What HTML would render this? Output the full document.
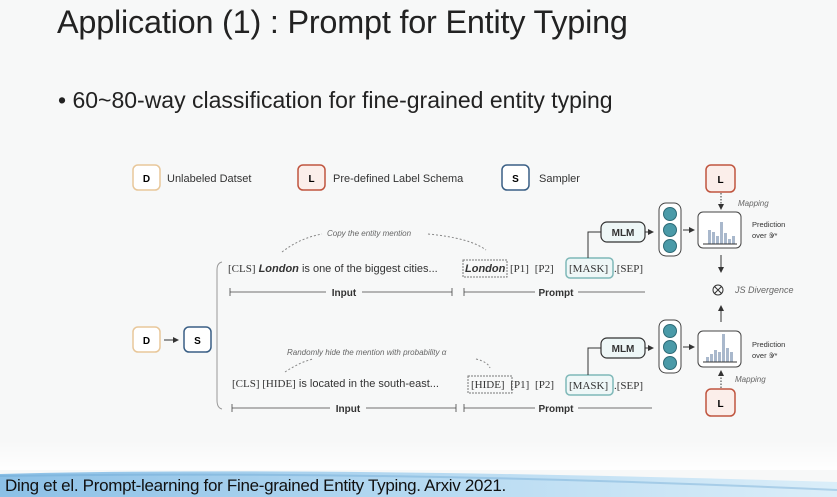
<!DOCTYPE html>
<html><head><meta charset="utf-8"><style>
body{margin:0;width:837px;height:497px;overflow:hidden;background:#f7f8f8;font-family:"Liberation Sans",sans-serif;position:relative}
.a{position:absolute;white-space:nowrap}
</style></head><body>
<div class="a" style="left:57px;top:4px;font-size:32.4px;color:#222;letter-spacing:-0.2px">Application (1) : Prompt for Entity Typing</div>
<div class="a" style="left:58px;top:87px;font-size:23px;color:#222">• 60~80-way classification for fine-grained entity typing</div>
<svg class="a" style="left:0;top:0" width="837" height="497" font-family="Liberation Sans, sans-serif">
<defs><linearGradient id="g" x1="0" y1="0" x2="1" y2="0"><stop offset="0" stop-color="#8cc0e6"/><stop offset="0.5" stop-color="#b5d9f1"/><stop offset="1" stop-color="#dbeef9"/></linearGradient>
<linearGradient id="gv" x1="0" y1="0" x2="0" y2="1"><stop offset="0" stop-color="#fff" stop-opacity="0"/><stop offset="1" stop-color="#fff" stop-opacity="0.9"/></linearGradient>
<marker id="ar" markerWidth="6" markerHeight="6" refX="5" refY="3" orient="auto"><path d="M0,0L6,3L0,6z" fill="#333"/></marker></defs>
<rect x="0" y="440" width="837" height="30" fill="url(#gv)"/>
<g font-size="10" font-weight="bold" text-anchor="middle">
<rect x="133" y="165" width="27" height="25" rx="5" fill="#fff" stroke="#e8c79a" stroke-width="1.5"/><text x="146.5" y="182">D</text>
<rect x="298" y="165" width="27" height="25" rx="5" fill="#fbeeea" stroke="#c0553f" stroke-width="1.5"/><text x="311.5" y="182">L</text>
<rect x="502" y="165" width="27" height="25" rx="5" fill="#fff" stroke="#3a5f85" stroke-width="1.5"/><text x="515.5" y="182">S</text>
<rect x="706" y="165" width="29" height="27" rx="5" fill="#fbeeea" stroke="#c0553f" stroke-width="1.5"/><text x="720.5" y="183">L</text>
<rect x="706" y="389" width="29" height="27" rx="5" fill="#fbeeea" stroke="#c0553f" stroke-width="1.5"/><text x="720.5" y="407">L</text>
<rect x="133" y="327" width="27" height="25" rx="5" fill="#fff" stroke="#e8c79a" stroke-width="1.5"/><text x="146.5" y="344">D</text>
<rect x="184" y="327" width="27" height="25" rx="5" fill="#fff" stroke="#3a5f85" stroke-width="1.5"/><text x="197.5" y="344">S</text>
</g>
<g font-size="11" fill="#333">
<text x="167" y="182">Unlabeled Datset</text><text x="333" y="182">Pre-defined Label Schema</text><text x="539" y="182">Sampler</text>
</g>
<line x1="164" y1="340" x2="178" y2="340" stroke="#333" marker-end="url(#ar)"/>
<path d="M222,262 Q217,263 217,270 V400 Q217,408 222,409" fill="none" stroke="#999"/>
<g font-size="8" font-style="italic" fill="#666">
<text x="327" y="236">Copy the entity mention</text>
<text x="287" y="355">Randomly hide the mention with probability α</text>
<text x="738" y="206">Mapping</text><text x="735" y="382">Mapping</text>
<text x="735" y="293" font-size="9">JS Divergence</text>
</g>
<path d="M282,252 Q300,238 322,234 M428,234 Q470,238 486,250" fill="none" stroke="#888" stroke-dasharray="2,2"/>
<path d="M285,372 Q300,362 313,359 M476,359 Q488,362 490,368" fill="none" stroke="#888" stroke-dasharray="2,2"/>
<g font-size="11" fill="#333">
<text x="228" y="272"><tspan font-family="Liberation Serif">[CLS]</tspan> <tspan font-weight="bold" font-style="italic">London</tspan> is one of the biggest cities...</text>
<rect x="463" y="260" width="44" height="17" fill="none" stroke="#777" stroke-dasharray="2,1"/>
<text x="465" y="272" font-weight="bold" font-style="italic">London</text>
<text x="510" y="272" font-family="Liberation Serif" word-spacing="3">[P1] [P2]</text>
<rect x="566" y="258" width="47" height="20" rx="4" fill="#eef7f7" stroke="#7fb8b8" stroke-width="1.5"/>
<text x="569" y="272" font-family="Liberation Serif">[MASK]</text><text x="614" y="272" font-family="Liberation Serif">.[SEP]</text>
<text x="232" y="387"><tspan font-family="Liberation Serif">[CLS] [HIDE]</tspan> is located in the south-east...</text>
<rect x="468" y="376" width="44" height="17" fill="none" stroke="#777" stroke-dasharray="2,1"/>
<text x="471" y="388" font-family="Liberation Serif" word-spacing="3">[HIDE] [P1] [P2]</text>
<rect x="566" y="375" width="47" height="20" rx="4" fill="#eef7f7" stroke="#7fb8b8" stroke-width="1.5"/>
<text x="569" y="389" font-family="Liberation Serif">[MASK]</text><text x="614" y="389" font-family="Liberation Serif">.[SEP]</text>
<g font-size="10" font-weight="bold" text-anchor="middle"><text x="344" y="296">Input</text><text x="556" y="296">Prompt</text><text x="348" y="412">Input</text><text x="556" y="412">Prompt</text></g>
</g>
<g stroke="#444" stroke-width="0.8">
<path d="M230,292H326M362,292H452M230,288v8M452,288v8M464,292H535M578,292H645M464,288v8"/>
<path d="M232,408H330M366,408H456M232,404v8M456,404v8M464,408H535M578,408H652M464,404v8"/>
</g>
<g stroke="#333" fill="none">
<path d="M588,258V232H601"/><path d="M588,375V348H601"/>
<line x1="645" y1="232" x2="653" y2="232" marker-end="url(#ar)"/><line x1="645" y1="348" x2="653" y2="348" marker-end="url(#ar)"/>
<line x1="683" y1="230" x2="694" y2="230" marker-end="url(#ar)"/><line x1="683" y1="347" x2="694" y2="347" marker-end="url(#ar)"/>
<line x1="721" y1="255" x2="721" y2="272" marker-end="url(#ar)"/><line x1="721" y1="322" x2="721" y2="306" marker-end="url(#ar)"/>
<line x1="721" y1="193" x2="721" y2="209" stroke-dasharray="1.5,1.5" marker-end="url(#ar)"/><line x1="721" y1="388" x2="721" y2="371" stroke-dasharray="1.5,1.5" marker-end="url(#ar)"/>
<circle cx="718" cy="290" r="5"/><path d="M714.5,286.5l7,7M721.5,286.5l-7,7"/>
</g>
<g font-size="10" font-weight="bold" text-anchor="middle" fill="#333">
<rect x="601" y="222" width="44" height="20" rx="6" fill="#eef7f7" stroke="#333" stroke-width="1.2"/><text x="623" y="236">MLM</text>
<rect x="601" y="338" width="44" height="20" rx="6" fill="#eef7f7" stroke="#333" stroke-width="1.2"/><text x="623" y="352">MLM</text>
</g>
<g stroke="#444" stroke-width="1">
<rect x="659" y="203" width="22" height="53" rx="7" fill="#fff"/><rect x="659" y="320" width="22" height="53" rx="7" fill="#fff"/>
<g fill="#4a9aa8" stroke="#2e6b77"><circle cx="670" cy="214" r="6.5"/><circle cx="670" cy="230" r="6.5"/><circle cx="670" cy="246" r="6.5"/>
<circle cx="670" cy="331" r="6.5"/><circle cx="670" cy="347" r="6.5"/><circle cx="670" cy="363" r="6.5"/></g>
<rect x="698" y="212" width="43" height="36" rx="5" fill="#fff"/><rect x="698" y="331" width="43" height="36" rx="5" fill="#fff"/>
</g>
<g fill="#a9b8cc">
<rect x="708" y="230" width="3" height="14"/><rect x="712" y="232" width="3" height="12"/><rect x="716" y="236" width="3" height="8"/><rect x="720" y="222" width="3" height="22"/><rect x="724" y="233" width="3" height="11"/><rect x="728" y="239" width="3" height="5"/><rect x="732" y="236" width="3" height="8"/>
<rect x="706" y="357" width="3" height="5"/><rect x="710" y="354" width="3" height="8"/><rect x="714" y="350" width="3" height="12"/><rect x="718" y="352" width="3" height="10"/><rect x="722" y="334" width="3" height="28"/><rect x="726" y="348" width="3" height="14"/><rect x="730" y="352" width="3" height="10"/>
</g>
<line x1="703" y1="244" x2="737" y2="244" stroke="#333"/><line x1="703" y1="362" x2="737" y2="362" stroke="#333"/>
<g font-size="7.5" fill="#333"><text x="752" y="227">Prediction</text><text x="752" y="238">over 𝒴*</text><text x="752" y="347">Prediction</text><text x="752" y="358">over 𝒴*</text></g>
<path d="M0,474 Q300,466 837,482 V497 H0z" fill="url(#g)"/>
<path d="M0,476 Q400,470 837,490" fill="none" stroke="#6aa6d3" stroke-width="2" opacity="0.4"/>
</svg>
<div class="a" style="left:5px;top:476px;font-size:17px;color:#111;letter-spacing:-0.3px">Ding et el. Prompt-learning for Fine-grained Entity Typing. Arxiv 2021.</div>
</body></html>
